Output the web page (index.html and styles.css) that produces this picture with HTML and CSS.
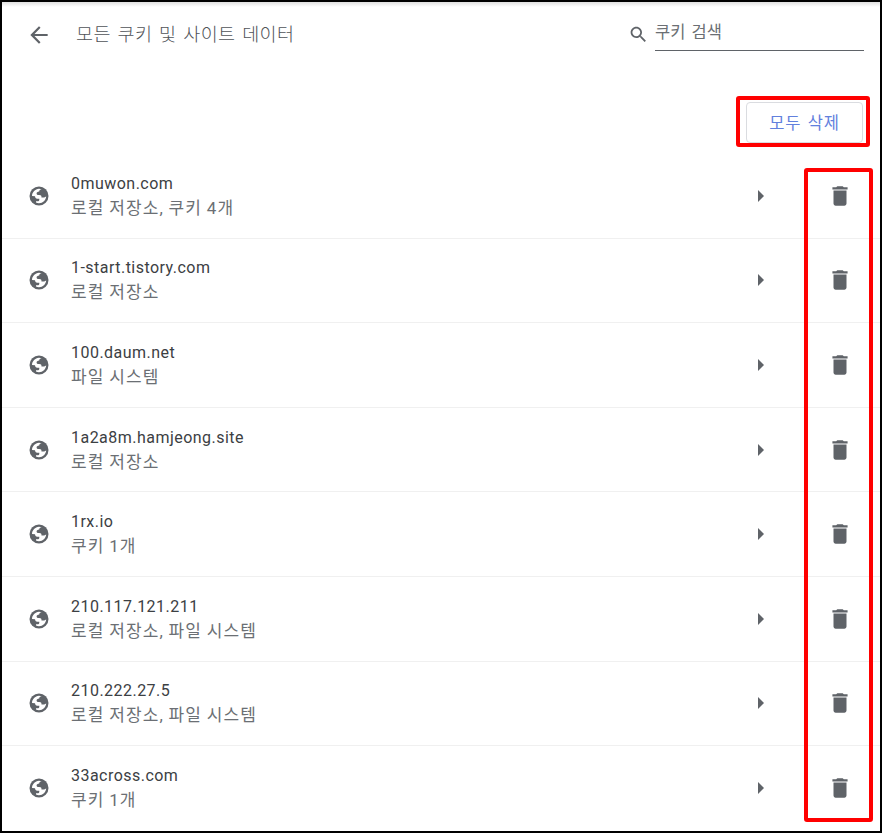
FILE: index.html
```
<!DOCTYPE html>
<html lang="ko">
<head>
<meta charset="utf-8">
<title>모든 쿠키 및 사이트 데이터</title>
<link rel="stylesheet" href="styles.css">
</head>
<body>
<svg class="defs" aria-hidden="true">
  <symbol id="globe" viewBox="0 0 20 20">
    <circle cx="10" cy="10" r="9.5" fill="#5f6368"/>
    <path fill="#fff" d="M3 10C3.1 6.3 6.1 3.2 10 2.8L12.7 3.3C11 3.6 10.4 4.2 10.2 5.4C8.5 5.5 7.5 6.4 7.6 7.6C7.7 8.9 8.7 9.2 10.2 9.1C12 9.1 12.6 9.9 12.5 11.4H15.2C16 11.4 16.4 10.9 17.2 10.5C16.9 14.2 13.9 17.1 10 17.2C8.8 17.2 7.9 17 7 16.6V15.2H9.2C10.2 15.2 10.4 14.2 10.3 12.8H8.2C6.8 12.8 6.2 11.8 6 10.3Z"/>
  </symbol>
  <symbol id="trash" viewBox="0 0 24 24"><path d="M6 19c0 1.1.9 2 2 2h8c1.1 0 2-.9 2-2V7H6v12zM19 4h-3.5l-1-1h-5l-1 1H5v2h14V4z"/></symbol>
  <symbol id="arrow" viewBox="0 0 6 12"><path d="M0 0L6 6L0 12Z"/></symbol>
</svg>
<main class="page">
  <header class="toolbar">
    <svg class="back" viewBox="0 0 24 24"><path d="M20 11H7.83l5.59-5.59L12 4l-8 8 8 8 1.41-1.41L7.83 13H20v-2z"/></svg>
    <h1>모든 쿠키 및 사이트 데이터</h1>
    <svg class="search-icon" viewBox="0 0 24 24"><path d="M15.5 14h-.79l-.28-.27C15.41 12.59 16 11.11 16 9.5 16 5.91 13.09 3 9.5 3S3 5.91 3 9.5 5.91 16 9.5 16c1.61 0 3.09-.59 4.23-1.57l.27.28v.79l5 4.99L20.49 19l-4.99-5zm-6 0C7.01 14 5 11.99 5 9.5S7.01 5 9.5 5 14 7.01 14 9.5 11.99 14 9.5 14z"/></svg>
    <div class="search">쿠키 검색</div>
  </header>
  <div class="actions"><div class="mark"><button>모두 삭제</button></div></div>
  <section class="list">
    <div class="row"><svg class="globe"><use href="#globe"/></svg><div class="text"><div class="site">0muwon.com</div><div class="detail">로컬 저장소, 쿠키 4개</div></div><svg class="arrow"><use href="#arrow"/></svg><svg class="trash"><use href="#trash"/></svg></div>
    <div class="row"><svg class="globe"><use href="#globe"/></svg><div class="text"><div class="site">1-start.tistory.com</div><div class="detail">로컬 저장소</div></div><svg class="arrow"><use href="#arrow"/></svg><svg class="trash"><use href="#trash"/></svg></div>
    <div class="row"><svg class="globe"><use href="#globe"/></svg><div class="text"><div class="site">100.daum.net</div><div class="detail">파일 시스템</div></div><svg class="arrow"><use href="#arrow"/></svg><svg class="trash"><use href="#trash"/></svg></div>
    <div class="row"><svg class="globe"><use href="#globe"/></svg><div class="text"><div class="site">1a2a8m.hamjeong.site</div><div class="detail">로컬 저장소</div></div><svg class="arrow"><use href="#arrow"/></svg><svg class="trash"><use href="#trash"/></svg></div>
    <div class="row"><svg class="globe"><use href="#globe"/></svg><div class="text"><div class="site">1rx.io</div><div class="detail">쿠키 1개</div></div><svg class="arrow"><use href="#arrow"/></svg><svg class="trash"><use href="#trash"/></svg></div>
    <div class="row"><svg class="globe"><use href="#globe"/></svg><div class="text"><div class="site">210.117.121.211</div><div class="detail">로컬 저장소, 파일 시스템</div></div><svg class="arrow"><use href="#arrow"/></svg><svg class="trash"><use href="#trash"/></svg></div>
    <div class="row"><svg class="globe"><use href="#globe"/></svg><div class="text"><div class="site">210.222.27.5</div><div class="detail">로컬 저장소, 파일 시스템</div></div><svg class="arrow"><use href="#arrow"/></svg><svg class="trash"><use href="#trash"/></svg></div>
    <div class="row"><svg class="globe"><use href="#globe"/></svg><div class="text"><div class="site">33across.com</div><div class="detail">쿠키 1개</div></div><svg class="arrow"><use href="#arrow"/></svg><svg class="trash"><use href="#trash"/></svg></div>
    <div class="highlight"></div>
  </section>
</main>
</body>
</html>
```
FILE: styles.css
```
* { box-sizing: border-box; }
body { margin: 0; background: #fff; }
.defs { display: none; }
.page {
  width: 882px;
  height: 833px;
  border: 2px solid #000;
  overflow: hidden;
  font-family: Roboto, "Noto Sans CJK KR", sans-serif;
  color: #5f6368;
  fill: #5f6368;
  background: linear-gradient(#e0e0e0, #fff 5px);
}
.toolbar {
  display: flex;
  height: 94px;
  padding-left: 24px;
}
.back { width: 26px; height: 26px; margin-top: 20px; }
h1 {
  width: 551px;
  margin: 17px 0 0 24px;
  color: #505358;
  font-size: 18.5px;
  line-height: 32px;
  font-weight: 300;
  letter-spacing: 0.4px;
  word-spacing: 1.8px;
  white-space: nowrap;
}
.search-icon { width: 21px; height: 21px; margin: 22px 0 0 1px; }
.search {
  width: 209px;
  height: 33px;
  margin: 16px 0 0 6px;
  border-bottom: 1px solid #5f6368;
  color: #6b6f74;
  font-size: 16.5px;
  line-height: 30px;
  word-spacing: 2px;
}
.actions { display: flex; justify-content: flex-end; padding-right: 10px; height: 58px; }
.mark {
  width: 134px;
  height: 51px;
  padding: 2px 3px 0 6px;
  border: 4px solid #f00;
  border-radius: 3px;
}
button {
  display: block;
  width: 117px;
  height: 41px;
  padding: 0;
  border: 1px solid #dadce0;
  border-radius: 4px;
  background: #fff;
  color: #6280dd;
  font: 400 16.5px/39px "Noto Sans CJK KR", sans-serif;
  letter-spacing: 0.8px;
  word-spacing: 1px;
}
.list { position: relative; }
.row {
  display: flex;
  align-items: center;
  height: 84.6px;
  padding-left: 27px;
  border-bottom: 1.5px solid #f0f0f0;
}
.row:nth-child(8) { border-bottom-color: transparent; }
.globe { width: 20px; height: 20px; }
.text { width: 690px; margin-left: 22px; }
.site {
  color: #3c4043;
  font-size: 16px;
  line-height: 25px;
  letter-spacing: 0.47px;
}
.detail {
  color: #6b6f74;
  font-size: 17px;
  line-height: 25px;
  letter-spacing: 1.1px;
  word-spacing: -0.6px;
}
.arrow { width: 6px; height: 12px; margin-left: -3px; }
.trash { width: 26px; height: 26px; margin-left: 63px; }
.highlight {
  position: absolute;
  left: 802px;
  top: 14px;
  width: 69px;
  height: 654px;
  border: 4px solid #f00;
  border-radius: 3px;
}
```
